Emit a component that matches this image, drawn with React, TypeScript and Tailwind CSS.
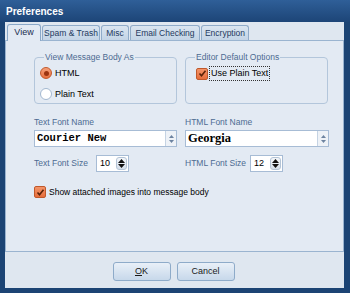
import React from "react";

const F = { fontFamily: '"Liberation Sans", Arial, sans-serif' };

function Tab({ label, active, w }: { label: string; active?: boolean; w: number }) {
  return (
    <div
      style={{ width: w }}
      className={
        active
          ? "h-[17px] mb-[-1px] border border-b-0 border-[#8aa8c8] rounded-t-[3px] bg-[#e3eaf3] flex items-center justify-center text-[9px] whitespace-nowrap text-[#1a2f4f] z-10"
          : "h-[15px] border border-b-0 border-[#8fabc9] rounded-t-[3px] bg-gradient-to-b from-[#dae5f0] to-[#c3d4e6] flex items-center justify-center text-[8.5px] whitespace-nowrap text-[#1f3a60]"
      }
    >
      {label}
    </div>
  );
}

function Radio({ checked }: { checked?: boolean }) {
  return checked ? (
    <div className="w-[12px] h-[12px] rounded-full border border-[#c2582a] bg-gradient-to-b from-[#f5a07a] to-[#e8703e] flex items-center justify-center">
      <div className="w-[5px] h-[5px] rounded-full bg-[#9c3410]" />
    </div>
  ) : (
    <div className="w-[12px] h-[12px] rounded-full border border-[#a3b8d0] bg-white" />
  );
}

function Check() {
  return (
    <div className="w-[12px] h-[12px] rounded-[2px] border border-[#c0582a] bg-gradient-to-b from-[#f39468] to-[#e66d3a] flex items-center justify-center">
      <svg width="9" height="9" viewBox="0 0 9 9">
        <path d="M1.5 4.5 L3.5 6.8 L7.5 1.8" stroke="#5a2208" strokeWidth="1.6" fill="none" />
      </svg>
    </div>
  );
}

function Select({ text, font }: { text: string; font: React.CSSProperties }) {
  return (
    <div className="h-[17px] border border-[#a7bcd5] bg-white flex items-center">
      <div className="flex-1 pl-[2px] text-black font-bold leading-none" style={font}>
        {text}
      </div>
      <div className="w-[11px] h-full border-l border-[#c5d3e3] bg-[#eef2f7] flex flex-col items-center justify-center gap-[2px]">
        <svg width="5" height="3" viewBox="0 0 5 3"><path d="M0 3 L2.5 0 L5 3Z" fill="#6d83a0" /></svg>
        <svg width="5" height="3" viewBox="0 0 5 3"><path d="M0 0 L2.5 3 L5 0Z" fill="#6d83a0" /></svg>
      </div>
    </div>
  );
}

function Spin({ value }: { value: string }) {
  return (
    <div className="w-[33px] h-[17px] border border-[#a7bcd5] bg-white flex items-center">
      <div className="flex-1 pl-[3px] text-[9px] text-black leading-none">{value}</div>
      <div className="w-[11px] h-[13px] mr-[1px] rounded-[3px] border border-[#b4c4d6] bg-gradient-to-b from-[#f3f6fa] to-[#d6e0eb] flex flex-col items-center justify-center gap-[1px]">
        <svg width="7" height="4" viewBox="0 0 7 4"><path d="M0 4 L3.5 0 L7 4Z" fill="#111" /></svg>
        <svg width="7" height="4" viewBox="0 0 7 4"><path d="M0 0 L3.5 4 L7 0Z" fill="#111" /></svg>
      </div>
    </div>
  );
}

function Group({ title, children }: { title: string; children: React.ReactNode }) {
  return (
    <div className="relative w-[143px] h-[47px] border border-[#b3c6db] rounded-[4px]">
      <span className="absolute left-[9px] top-[-7px] px-[1px] bg-[#e3eaf3] text-[8.5px] leading-[12px] whitespace-nowrap text-[#4d6a92]">
        {title}
      </span>
      {children}
    </div>
  );
}

function Button({ children }: { children: React.ReactNode }) {
  return (
    <div className="w-[58px] h-[19px] rounded-[3px] border border-[#8eabc9] bg-gradient-to-b from-[#e9f0f8] to-[#c7d8ea] flex items-center justify-center text-[9px] text-[#1a1a1a]">
      {children}
    </div>
  );
}

export default function App() {
  return (
    <div style={F} className="w-[350px] h-[293px] bg-[#1c4474] flex flex-col overflow-hidden">
      <div className="h-[22px] shrink-0 bg-gradient-to-b from-[#2f5f98] to-[#1d4577] flex items-center pl-[6px]">
        <span className="text-white font-bold text-[10px]">Preferences</span>
      </div>
      <div className="flex-1 ml-[5px] mr-[6px] mb-[5px] bg-[#dfe7f0] flex flex-col">
        <div className="h-[18px] shrink-0 flex items-end pl-[2px] gap-[1px]">
          <Tab label="View" active w={34} />
          <Tab label="Spam & Trash" w={58} />
          <Tab label="Misc" w={28} />
          <Tab label="Email Checking" w={70} />
          <Tab label="Encryption" w={48} />
        </div>
        <div className="h-[212px] shrink-0 border border-[#9ab4d0] bg-[#e3eaf3] flex flex-col pl-[28px]">
          <div className="mt-[16px] flex gap-[8px]">
            <Group title="View Message Body As">
              <div className="flex flex-col gap-[9px] pl-[5px] pt-[9px]">
                <div className="flex items-center gap-[3px]">
                  <Radio checked />
                  <span className="text-[9px] text-black leading-none">HTML</span>
                </div>
                <div className="flex items-center gap-[3px]">
                  <Radio />
                  <span className="text-[9px] text-black leading-none">Plain Text</span>
                </div>
              </div>
            </Group>
            <Group title="Editor Default Options">
              <div className="flex items-center pl-[10px] pt-[8px]">
                <Check />
                <span className="ml-[1px] px-[1px] border border-dotted border-[#333] text-[9px] text-black leading-[13px] whitespace-nowrap">
                  Use Plain Text
                </span>
              </div>
            </Group>
          </div>
          <div className="mt-[12px] grid grid-cols-[143px_144px] gap-x-[8px]">
            <div className="flex flex-col">
              <span className="text-[8.5px] leading-[13px] text-[#4d6a92] whitespace-nowrap">Text Font Name</span>
              <div className="mt-[1px]">
                <Select text="Courier New" font={{ fontFamily: '"Liberation Mono", monospace', fontSize: "10.5px" }} />
              </div>
              <div className="mt-[8px] flex items-center">
                <span className="w-[62px] text-[8.5px] text-[#4d6a92] whitespace-nowrap">Text Font Size</span>
                <Spin value="10" />
              </div>
            </div>
            <div className="flex flex-col">
              <span className="text-[8.5px] leading-[13px] text-[#4d6a92] whitespace-nowrap">HTML Font Name</span>
              <div className="mt-[1px]">
                <Select text="Georgia" font={{ fontFamily: '"Liberation Serif", "DejaVu Serif", serif', fontSize: "12.5px" }} />
              </div>
              <div className="mt-[8px] flex items-center">
                <span className="w-[65px] text-[8.5px] text-[#4d6a92] whitespace-nowrap">HTML Font Size</span>
                <Spin value="12" />
              </div>
            </div>
          </div>
          <div className="mt-[14px] flex items-center gap-[3px]">
            <Check />
            <span className="text-[8.5px] text-black leading-none whitespace-nowrap">Show attached images into message body</span>
          </div>
        </div>
        <div className="flex-1 flex items-start justify-center gap-[6px] pt-[10px] pr-[2px]">
          <Button>
            <span className="underline">O</span>K
          </Button>
          <Button>Cancel</Button>
        </div>
      </div>
    </div>
  );
}
